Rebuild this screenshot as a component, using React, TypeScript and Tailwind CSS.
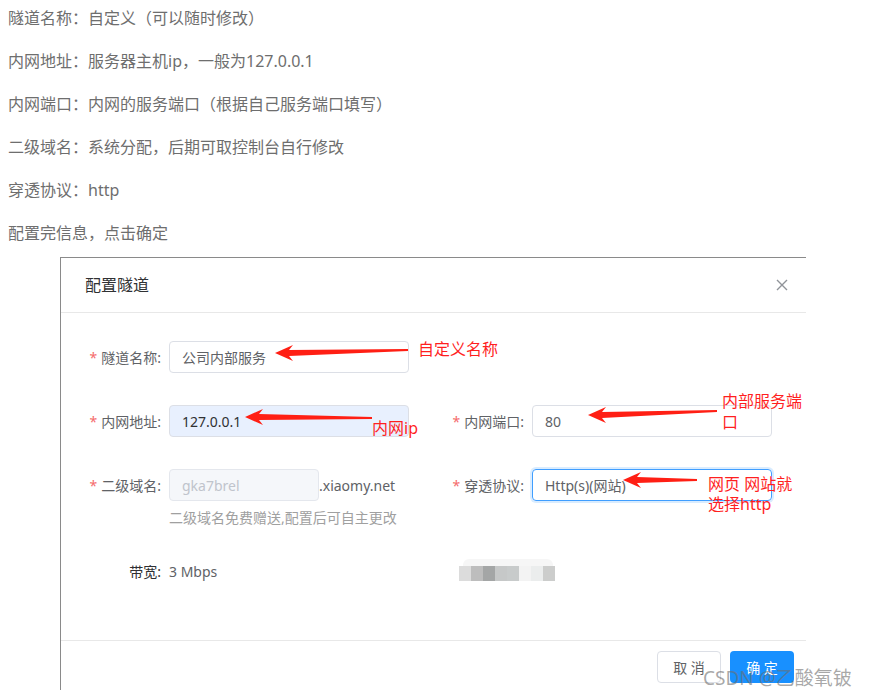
import React from 'react';

// 顶部说明文字
const notes: [string, string][] = [
  ['隧道名称：', '自定义（可以随时修改）'],
  ['内网地址：', '服务器主机ip，一般为127.0.0.1'],
  ['内网端口：', '内网的服务端口（根据自己服务端口填写）'],
  ['二级域名：', '系统分配，后期可取控制台自行修改'],
  ['穿透协议：', 'http'],
  ['配置完信息，点击确定', ''],
];

const Label = ({ text, required = true }: { text: string; required?: boolean }) => (
  <div className="w-[108px] h-[32px] shrink-0 flex items-center justify-end pr-[8px] text-[14px] text-[#606266]">
    {required && <span className="text-[#f56c6c] mr-[4px]">*</span>}
    <span>{text}:</span>
  </div>
);

// 红色箭头（标注）
const arrow = (tx: number, ty: number, ex: number, ey: number) => {
  const L = 18;
  const H = 8;
  const W = 3;
  return [
    [tx, ty],
    [tx + L, ty - H],
    [tx + L - 4, ty - W],
    [ex, ey - 1],
    [ex, ey + 1],
    [tx + L - 4, ty + W],
    [tx + L, ty + H],
  ]
    .map((p) => p.join(','))
    .join(' ');
};

const blurCells = ['#dcdcdc', '#bdbdbd', '#a4a6a6', '#c6c8c8', '#c8cbcb', '#f3f3f3', '#ebeded', '#cccdcc'];

export default function App() {
  return (
    <div
      className="relative w-[870px] h-[696px] overflow-hidden bg-white"
      style={{ fontFamily: '"Noto Sans", "Noto Sans CJK SC", sans-serif' }}
    >
      {/* 说明 */}
      <div className="-mt-[4px] pl-[8px] text-[16px] text-[#6e6e6e]">
        {notes.map(([k, v]) => (
          <div key={k} className="h-[43px] flex items-center">
            <span>{k}</span>
            <span>{v}</span>
          </div>
        ))}
      </div>

      {/* 弹窗 */}
      <div className="mt-[3px] ml-[60px] w-[746px] h-[433px] border-l border-t border-[#8a8a8a] bg-white">
        <div className="h-[55px] border-b border-[#e8e8e8] flex items-center justify-between pl-[24px] pr-[18px]">
          <span className="text-[16px] text-[#303133]">配置隧道</span>
          <svg width="12" height="12" viewBox="0 0 12 12" className="text-[#909399]">
            <path d="M1 1 L11 11 M11 1 L1 11" stroke="currentColor" strokeWidth="1.4" fill="none" />
          </svg>
        </div>

        <div className="h-[328px] border-b border-[#e8e8e8] pt-[28px] text-[14px]">
          {/* 第一行 */}
          <div className="flex">
            <Label text="隧道名称" />
            <div className="w-[240px] h-[32px] border border-[#dcdfe6] rounded-[4px] flex items-center pl-[12px] text-[#606266]">
              公司内部服务
            </div>
          </div>

          {/* 第二行 */}
          <div className="flex mt-[32px]">
            <div className="flex w-[363px]">
              <Label text="内网地址" />
              <div className="w-[240px] h-[32px] border border-[#dcdfe6] bg-[#e8f0fe] rounded-[4px] flex items-center pl-[12px] text-[#303133]">
                127.0.0.1
              </div>
            </div>
            <div className="flex">
              <Label text="内网端口" />
              <div className="w-[240px] h-[32px] border border-[#dcdfe6] rounded-[4px] flex items-center pl-[12px] text-[#606266]">
                80
              </div>
            </div>
          </div>

          {/* 第三行 */}
          <div className="flex mt-[32px]">
            <div className="flex w-[363px]">
              <Label text="二级域名" />
              <div className="flex flex-col">
                <div className="flex items-center">
                  <div className="w-[150px] h-[32px] border border-[#e4e7ed] bg-[#f5f7fa] rounded-[4px] flex items-center pl-[12px] text-[#c0c4cc]">
                    gka7brel
                  </div>
                  <span className="text-[#606266]">.xiaomy.net</span>
                </div>
                <div className="mt-[7px] leading-[20px] text-[#a0a0a0]">二级域名免费赠送,配置后可自主更改</div>
              </div>
            </div>
            <div className="flex">
              <Label text="穿透协议" />
              <div className="w-[240px] h-[32px] border border-[#409eff] shadow-[0_0_0_2px_rgba(64,158,255,0.2)] rounded-[4px] flex items-center pl-[12px] text-[#606266]">
                Http(s)(网站)
              </div>
            </div>
          </div>

          {/* 带宽 */}
          <div className="flex items-center mt-[33px]">
            <div className="flex w-[363px] items-center">
              <div className="w-[108px] h-[20px] flex items-center justify-end pr-[8px] text-[#303133]">带宽:</div>
              <span className="text-[#606266]">3 Mbps</span>
            </div>
            <div className="flex flex-col ml-[35px] -mt-[4px]">
              <div className="flex h-[7px] w-[90px] ml-[4px] bg-[#f6f6f6] rounded-t-[6px]" />
              <div className="flex h-[15px]">
                {blurCells.map((c, i) => (
                  <div key={i} className="w-[12px] h-full" style={{ background: c }} />
                ))}
              </div>
            </div>
          </div>
        </div>

        <div className="h-[48px] flex justify-end items-start pt-[10px] pr-[12px] gap-[9px] text-[14px]">
          <button className="w-[64px] h-[32px] border border-[#dcdfe6] rounded-[4px] text-[#606266] bg-white">取 消</button>
          <button className="w-[64px] h-[32px] rounded-[4px] text-white bg-[#1890ff]">确 定</button>
        </div>
      </div>

      {/* 标注 */}
      <svg className="absolute left-0 top-0 pointer-events-none" width="870" height="696">
        <polygon points={arrow(275, 353, 408, 350)} fill="#ff1f14" />
        <polygon points={arrow(245, 417, 372, 418)} fill="#ff1f14" />
        <polygon points={arrow(588, 415, 717, 411)} fill="#ff1f14" />
        <polygon points={arrow(623, 480, 697, 480)} fill="#ff1f14" />
      </svg>
      <div className="absolute left-[418px] top-[339px] text-[16px] leading-[20px] text-[#ff1f1f]">自定义名称</div>
      <div className="absolute left-[372px] top-[418px] text-[16px] leading-[20px] text-[#ff1f1f]">内网ip</div>
      <div className="absolute left-[722px] top-[391px] w-[84px] text-[16px] leading-[21px] text-[#ff1f1f] break-all">
        内部服务端口
      </div>
      <div className="absolute left-[708px] top-[474px] w-[100px] text-[16px] leading-[20px] text-[#ff1f1f]">
        网页 网站就
        <br />
        选择http
      </div>

      <div className="absolute left-[703px] top-[665px] text-[19px] leading-[26px] text-[rgba(110,110,110,0.6)]">
        CSDN @乙酸氧铍
      </div>
    </div>
  );
}
